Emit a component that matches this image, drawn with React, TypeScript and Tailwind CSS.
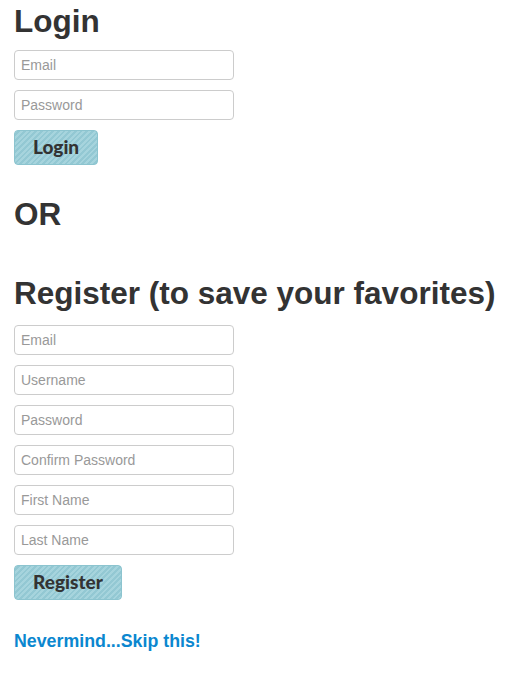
import React from 'react';

const Field: React.FC<{ placeholder: string; type?: string }> = ({ placeholder, type = 'text' }) => (
  <input
    type={type}
    placeholder={placeholder}
    className="block w-[220px] h-[30px] rounded-[4px] border border-[#cccccc] bg-white px-[6px] text-[14px] text-[#555] placeholder:text-[#999] outline-none font-['Liberation_Sans',Arial,sans-serif]"
  />
);

const StripeButton: React.FC<{ label: string; width: string }> = ({ label, width }) => (
  <button
    className={`${width} h-[35px] rounded-[4px] border border-[#8cc4cf] bg-[#9dcfd9] bg-[repeating-linear-gradient(135deg,#a6d4dd_0px,#a6d4dd_2px,#93c8d3_2px,#93c8d3_4px)] text-[19px] font-black text-[#333] font-['Lato',sans-serif]`}
  >
    {label}
  </button>
);

export default function App() {
  return (
    <div className="pl-[14px] text-[#333] font-['Liberation_Sans',Arial,sans-serif]">
      <h1 className="text-[31.5px] leading-[42px] font-bold">Login</h1>
      <form className="mt-[8px] flex flex-col gap-[10px]" onSubmit={(e) => e.preventDefault()}>
        <Field placeholder="Email" />
        <Field placeholder="Password" type="password" />
        <div>
          <StripeButton label="Login" width="w-[84px]" />
        </div>
      </form>

      <h2 className="mt-[28px] text-[31.5px] leading-[42px] font-bold">OR</h2>

      <h2 className="mt-[37px] text-[31.5px] leading-[42px] font-bold whitespace-nowrap">
        Register (to save your favorites)
      </h2>
      <form className="mt-[11px] flex flex-col gap-[10px]" onSubmit={(e) => e.preventDefault()}>
        <Field placeholder="Email" />
        <Field placeholder="Username" />
        <Field placeholder="Password" type="password" />
        <Field placeholder="Confirm Password" type="password" />
        <Field placeholder="First Name" />
        <Field placeholder="Last Name" />
        <div>
          <StripeButton label="Register" width="w-[108px]" />
        </div>
      </form>

      <a href="#" className="mt-[29px] block w-fit text-[17.8px] leading-[24px] font-bold text-[#0b87cf]">
        Nevermind...Skip this!
      </a>
    </div>
  );
}
